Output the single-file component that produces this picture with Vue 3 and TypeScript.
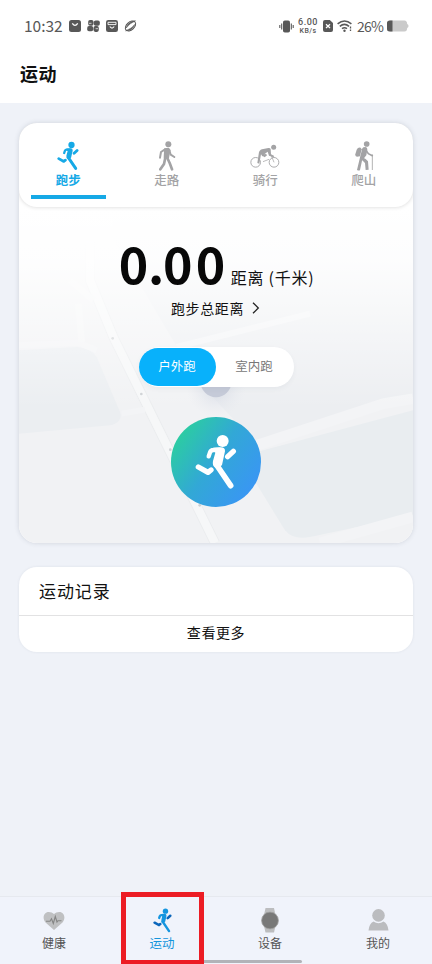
<script setup lang="ts">
import { ref } from 'vue'

type IconName = 'run' | 'walk' | 'bike' | 'hike'
interface Sport { id: IconName; label: string }

const sports: Sport[] = [
  { id: 'run', label: '跑步' },
  { id: 'walk', label: '走路' },
  { id: 'bike', label: '骑行' },
  { id: 'hike', label: '爬山' },
]
const navItems: { id: string; label: string }[] = [
  { id: 'health', label: '健康' },
  { id: 'sport', label: '运动' },
  { id: 'device', label: '设备' },
  { id: 'mine', label: '我的' },
]
const modes: string[] = ['户外跑', '室内跑']
const sport = ref<IconName>('run')
const mode = ref(modes[0])
const nav = ref('sport')
</script>

<template>
  <div class="screen">
    <svg class="defs" width="0" height="0">
      <symbol id="runner" viewBox="195 281 126 168">
        <circle cx="278" cy="302" r="18" fill="currentColor" />
        <path d="M244 326 Q247 322 252 322 L272 321 Q286 321 285 333 L276 374 Q270 384 256 382 Q246 377 249 362 L256 337Z" fill="currentColor" />
        <g fill="none" stroke="currentColor" stroke-linecap="round" stroke-linejoin="round">
          <path d="M268 328 L250 329 Q243 329 240 336 L236 348" stroke-width="13" />
          <path d="M310 333 L293 349" stroke-width="16" />
          <path d="M262 377 L302 436" stroke-width="17" />
          <path d="M205 380 L234 396 L243 389" stroke-width="16" />
        </g>
      </symbol>
    </svg>

    <header class="top">
      <div class="status">
        <div class="status-left">
          <span class="time">10:32</span>
          <svg width="12" height="12" viewBox="0 0 12 12"><rect width="12" height="12" rx="2.5" fill="#585858" /><path d="M3.3 3.4Q6 7.2 8.7 3.4" fill="none" stroke="#fff" stroke-width="1.3" /></svg>
          <svg width="13" height="12" viewBox="0 0 13 12"><g fill="#585858"><rect x="1.2" y="0" width="5.3" height="5.8" rx="1.8" /><rect x="6.8" y=".5" width="6" height="5.2" rx="1.8" /><rect x=".2" y="6.1" width="6" height="5.2" rx="1.8" /><rect x="6.5" y="6.1" width="5.3" height="5.8" rx="1.8" /></g><path d="M2 3.3h2.5M8.6 8.7H11" stroke="#fff" stroke-width=".7" /></svg>
          <svg width="12" height="12" viewBox="0 0 12 12"><rect width="12" height="12" rx="2.3" fill="#585858" /><path d="M2 4.6V2.3h8v2.3M2 4.6h8" stroke="#fff" fill="none" stroke-width=".9" /><path d="M3.8 6.5Q6 9.6 8.2 6.5" stroke="#fff" fill="none" stroke-width="1.2" /></svg>
          <svg width="13" height="12" viewBox="0 0 13 12"><ellipse cx="6.5" cy="6" rx="6" ry="3.9" transform="rotate(-42 6.5 6)" stroke-width="1" fill="none" stroke="#585858" /><path d="M1.6 10.8Q8.8 10.6 10.8 4.4Q8.2 8.4 1.6 10.8ZM2.2 8Q3.5 1.8 11.4 .8Q5.4 3.4 2.2 8Z" fill="#585858" stroke="#585858" stroke-width=".6" /></svg>
        </div>
        <div class="status-right">
          <svg width="15" height="13" viewBox="0 0 15 13"><rect x="4" y=".4" width="7" height="12.2" rx="1.8" fill="#585858" /><path d="M2.7 3.5v6M12.3 3.5v6M.8 5v3M14.2 5v3" stroke="#585858" stroke-width="1.1" /></svg>
          <span class="speed"><b>6.00</b><i>KB/s</i></span>
          <svg class="sim" width="10" height="12" viewBox="0 0 10 12"><path d="M2 0H6.8L10 3V10Q10 12 8 12H2Q0 12 0 10V2Q0 0 2 0Z" fill="#585858" /><path d="M3 4.3L7 8M7 4.3L3 8" stroke="#fff" stroke-width="1.3" /></svg>
          <svg class="wifi" width="16" height="12" viewBox="0 0 16 12"><g fill="none" stroke="#585858" stroke-width="1.6"><path d="M.6 3.8Q7.5-1.8 14.4 3.8M2.8 6.4Q7.5 2.4 12 6.4M5 8.7Q7.5 6.7 10 8.7" /></g><circle cx="7.5" cy="10.7" r="1.2" fill="#585858" /><path d="M13.5 6.5v2M13.5 9.5v1.5" stroke="#585858" stroke-width="1.3" /></svg>
          <span class="percent">26%</span>
          <svg width="22" height="12" viewBox="0 0 22 12"><path d="M3 .5H17.5Q20 .5 20.2 4L21.4 5V7L20.2 8Q20 11.5 17.5 11.5H3Q0 11.5 0 9V3Q0 .5 3 .5Z" fill="#cacaca" /><path d="M5.5 .5H3Q0 .5 0 3V9Q0 11.5 3 11.5H5.5Z" fill="#585858" /></svg>
        </div>
      </div>
      <h1>运动</h1>
    </header>

    <main>
      <section class="sport-card">
        <div class="tabs">
          <button v-for="s in sports" :key="s.id" class="tab" :class="{ active: sport === s.id }" @click="sport = s.id">
            <svg v-if="s.id === 'run'" class="tab-icon" width="22" height="30"><use href="#runner" /></svg>
            <svg v-else-if="s.id === 'walk'" class="tab-icon" width="18" height="30" viewBox="443 94 54 90">
              <circle cx="474" cy="104" r="9" fill="currentColor" />
              <path d="M462 116L474 114Q480 116 480 122L476 146L460 146L461 126Z" fill="currentColor" />
              <g fill="none" stroke="currentColor" stroke-linecap="round" stroke-linejoin="round"><path d="M464 119L452 127L449 144" stroke-width="6" /><path d="M477 121L481 135L492 142" stroke-width="6" /><path d="M465 144L461 163L450 179" stroke-width="8" /><path d="M470 143L478 160L485 179" stroke-width="8" /></g>
            </svg>
            <svg v-else-if="s.id === 'bike'" class="tab-icon" width="30" height="30" viewBox="103 94 90 90">
              <circle cx="174" cy="113" r="7.5" fill="currentColor" />
              <g fill="none" stroke="currentColor"><circle cx="120" cy="158" r="14.5" stroke-width="2.7" /><circle cx="175" cy="158" r="14.5" stroke-width="2.7" /><path d="M142 156L160 149M167 138L175 158" stroke-width="2.2" /></g>
              <path d="M130 127Q134 118 143 118L158 115Q163 114 165 118L166 134L176 139L173 143L160 138L156 126L147 133L149 139L140 140L136 134L131 162L125 160Z" fill="currentColor" />
              <path d="M141 138L151 132L154 137L147 143Z" fill="currentColor" />
            </svg>
            <svg v-else class="tab-icon" width="20" height="30" viewBox="412 94 60 90">
              <circle cx="450" cy="103" r="8.5" fill="currentColor" />
              <path d="M432 114Q424 112 420 120L416 134Q415 141 421 141L430 140L435 119Z" fill="currentColor" />
              <path d="M437 116Q439 112 446 112Q453 113 452 120L449 137L436 153L430 181Q428 184 421 181L431 139Z" fill="currentColor" />
              <path d="M436 142Q449 147 454 155L456 180L447 181L445 160L436 151Z" fill="currentColor" />
              <path d="M449 123L455 132L467 138" fill="none" stroke="currentColor" stroke-width="5" stroke-linecap="round" />
              <path d="M467 134V181" stroke="currentColor" stroke-width="2.5" />
            </svg>
            <span>{{ s.label }}</span>
          </button>
        </div>

        <div class="stage">
          <svg class="map" viewBox="27 -40 1182 1008" preserveAspectRatio="none">
            <defs>
              <linearGradient id="fade" x1="0" y1="0" x2="0" y2="1"><stop offset="0" stop-color="#fff" /><stop offset=".15" stop-color="#fff" stop-opacity=".9" /><stop offset=".6" stop-color="#fff" stop-opacity="0" /></linearGradient>
              <radialGradient id="glow"><stop offset="0" stop-color="#c9cfdd" stop-opacity=".7" /><stop offset="1" stop-color="#e4e7ee" stop-opacity="0" /></radialGradient>
            </defs>
            <path d="M27-40H1209V968H27Z" fill="#f1f2f4" />
            <path d="M27 390L200 380Q240 380 260 410L330 575Q340 605 300 615L27 640Z" fill="#ebeef1" />
            <path d="M320-40H1209V530L740 670L560 480L300 40Z" fill="#eceef1" />
            <path d="M740 695L1209 570V885L900 950Q850 960 825 930L730 775Z" fill="#e9edf0" />
            <g fill="none">
              <path d="M240 60V180L310 350L615 968" stroke="#eaecee" stroke-width="30" />
              <path d="M240 60V180L310 350L615 968" stroke="#f6f7f8" stroke-width="25" />
              <path d="M740 675L1120 550L1209 535M930 968L1209 890" stroke="#f3f4f6" stroke-width="32" />
              <path d="M27 375L205 367L260 390M335 580L405 568M500 380L900 280" stroke="#f3f4f6" stroke-width="18" />
              <path d="M180 180L250 240M205 250L215 365" stroke="#f4f5f6" stroke-width="20" />
            </g>
            <g fill="#cdd0d3"><circle cx="308" cy="354" r="4" /><circle cx="394" cy="521" r="4" /><circle cx="481" cy="688" r="4" /><circle cx="569" cy="855" r="4" /></g>
            <path d="M27-40H1209V968H27Z" fill="url(#fade)" />
            <circle cx="618" cy="500" r="90" fill="url(#glow)" />
            <circle cx="618" cy="485" r="46" fill="#c5cad8" />
          </svg>
          <div class="distance"><strong>0<em>.</em>00</strong><span>距离 (千米)</span></div>
          <a class="total">跑步总距离<svg width="8" height="12" viewBox="0 0 8 12"><path d="M1 .7L6.3 6L1 11.3" fill="none" stroke="#222" stroke-width="1.3" /></svg></a>
          <div class="modes">
            <button v-for="m in modes" :key="m" :class="{ active: mode === m }" @click="mode = m">{{ m }}</button>
          </div>
          <button class="start"><svg width="42" height="56"><use href="#runner" /></svg></button>
        </div>
      </section>

      <section class="records">
        <h2>运动记录</h2>
        <a>查看更多</a>
      </section>
    </main>

    <nav>
      <button v-for="n in navItems" :key="n.id" :class="{ active: nav === n.id }" @click="nav = n.id">
        <svg v-if="n.id === 'health'" width="22" height="25" viewBox="0 0 22 25"><path d="M11 22L2.5 14.5C-1 10.5 .5 4 5.8 4Q9 4 11 6Q13 4 16.2 4C21.5 4 23 10.5 19.5 14.5Z" fill="#bfc0c2" /><path d="M3 13.2H7L8.5 10.8L10.3 15.5L12.3 8.5L14 14L15 12.7H18.5" fill="none" stroke="#858585" stroke-width="1.1" /></svg>
        <svg v-else-if="n.id === 'sport'" width="19" height="25" viewBox="195 281 126 168">
          <g fill="none" stroke="#0b66bb" stroke-width="17" stroke-linecap="round"><path d="M310 333L293 349M205 380L234 396L243 389" /></g>
          <circle cx="278" cy="302" r="18" fill="#1595df" />
          <path d="M244 326L272 320Q286 320 285 333L276 374L254 382Q246 375 251 358L256 337Z" fill="#1595df" />
          <path d="M268 328L250 329Q243 329 240 336L236 348M262 377L302 436" fill="none" stroke="#1595df" stroke-width="16" stroke-linecap="round" />
        </svg>
        <svg v-else-if="n.id === 'device'" width="20" height="25" viewBox="0 0 20 25"><path d="M5.5 0H14L15.5 7V18L14 24.5H5.5L4 18V7Z" fill="#bcbdbf" /><circle cx="10" cy="12.5" r="8.4" fill="#787878" stroke="#a1a1a1" stroke-width=".8" /></svg>
        <svg v-else width="21" height="25" viewBox="0 0 21 25"><circle cx="10.5" cy="7.4" r="6.3" fill="#bbbcbf" /><path d="M.5 22.5Q1.2 15.5 5.5 13.5Q10.5 17 15.5 13.5Q19.8 15.5 20.5 22.5Z" fill="#bbbcbf" /></svg>
        <span>{{ n.label }}</span>
      </button>
      <i class="home-bar"></i>
      <i class="marker"></i>
    </nav>
  </div>
</template>

<style>
body { margin: 0; background: #eef2f8; }
</style>

<style scoped>
.screen { width: 432px; height: 964px; display: flex; flex-direction: column; overflow: hidden; background: #eff2f8; color: #111; font-family: "Noto Sans", "Noto Sans CJK SC", sans-serif; }
.defs { position: absolute; }
button { border: 0; padding: 0; background: none; font: inherit; color: inherit; }
svg { display: block; flex: none; }
.top { height: 103px; background: #fff; box-sizing: border-box; padding-top: 14px; flex: none; }
.status { height: 24px; display: flex; justify-content: space-between; padding: 0 23px 0 24px; color: #585858; }
.status-left, .status-right { display: flex; align-items: center; }
.status-left { gap: 6px; }
.time { font: 15.5px/22px "Noto Sans CJK SC", sans-serif; letter-spacing: 0; width: 39px; height: 24px; }
.speed { display: flex; flex-direction: column; align-items: center; width: 20px; margin: 0 5px 0 4px; }
.speed b { font: 500 9px/9px Roboto, sans-serif; letter-spacing: .5px; height: 9px; }
.speed i { font: 500 7px/8px Roboto, sans-serif; letter-spacing: .4px; height: 8px; }
.wifi { margin: 0 4px; }
.percent { font: 14px/24px "Noto Sans CJK SC", sans-serif; width: 25px; margin-right: 5px; letter-spacing: -.8px; }
h1 { margin: 22px 0 0 20px; font-size: 18px; line-height: 27px; font-weight: 700; letter-spacing: .5px; font-family: "Noto Sans CJK SC", sans-serif; }
main { flex: 1; padding: 20px 19px 0; }
.sport-card { height: 420px; border-radius: 18px; overflow: hidden; background: #fff; box-shadow: 0 0 5px rgba(55, 65, 85, .17); display: flex; flex-direction: column; }
.tabs { height: 84px; flex: none; display: grid; grid-template-columns: repeat(4, 1fr); background: #fff; border-radius: 18px; box-shadow: 0 0 4px rgba(0, 0, 0, .17); z-index: 1; }
.tab { display: flex; flex-direction: column; align-items: center; padding-top: 18px; color: #a3a3a5; font: 500 12.5px/18px "Noto Sans CJK SC", sans-serif; position: relative; }
.tab.active { color: #16a9e6; font-weight: 700; }
.tab.active::after { content: ""; position: absolute; width: 75px; height: 4px; bottom: 8px; left: 12px; background: #16a9e6; }
.stage { flex: 1; display: flex; flex-direction: column; align-items: center; position: relative; }
.map { position: absolute; inset: 0; width: 100%; height: 100%; }
.distance, .total, .modes, .start { position: relative; }
.distance { margin: 22px 0 0 1px; height: 68px; display: flex; align-items: baseline; }
.distance strong { font: 700 50px/66px "Noto Sans CJK SC", sans-serif; letter-spacing: 3.3px; width: 111px; margin-right: 1px; color: #080808; white-space: nowrap; }
.distance em { font-style: normal; margin: 0 -4.5px 0 -3.5px; }
.distance span { font: 16px/24px "Noto Sans CJK SC", sans-serif; letter-spacing: .75px; }
.total { margin: 1px 0 0 -1px; display: flex; align-items: center; gap: 8px; font: 14px/20px "Noto Sans CJK SC", sans-serif; letter-spacing: .6px; }
.modes { display: grid; grid-template-columns: 77px 77px; width: 155px; height: 40px; box-sizing: border-box; margin-top: 29px; padding: 1px 0; background: #fff; border-radius: 20px; box-shadow: 0 2px 5px rgba(60, 70, 90, .05); font: 12.5px/34px "Noto Sans CJK SC", sans-serif; color: #777; }
.modes button { border-radius: 19px; height: 38px; padding-bottom: 2px; }
.modes .active { background: #08b1fb; color: #fff; }
.start { width: 90px; height: 90px; margin-top: 30px; border-radius: 50%; background: linear-gradient(125deg, #2bd09d 10%, #32a8d6 48%, #3997f2 85%); color: #fff; display: grid; place-items: center; }
.records { height: 85px; margin-top: 24px; border-radius: 18px; background: #fff; box-shadow: 0 0 3px rgba(60, 70, 90, .09); }
h2 { height: 49px; box-sizing: border-box; margin: 0; padding-left: 20px; border-bottom: 1px solid #e2e2e3; font: 17px/48px "Noto Sans CJK SC", sans-serif; letter-spacing: .9px; }
.records a { display: block; text-align: center; font: 14px/32px "Noto Sans CJK SC", sans-serif; letter-spacing: .6px; }
nav { position: relative; height: 68px; flex: none; box-sizing: border-box; border-top: 1px solid #e6e9ef; display: grid; grid-template-columns: repeat(4, 1fr); background: #f0f3fb; }
nav button { display: flex; flex-direction: column; align-items: center; padding-top: 11px; font: 12px/20px "Noto Sans CJK SC", sans-serif; color: #555; }
nav button.active { color: #1495dc; }
nav button.active span { font-size: 12.5px; }
.home-bar { position: absolute; left: 130px; top: 63px; width: 172px; height: 3px; border-radius: 2px; background: #b2b3b8; }
.marker { position: absolute; left: 121px; top: -5px; width: 83px; height: 73px; box-sizing: border-box; border: 5px solid #ec1c24; }
</style>
